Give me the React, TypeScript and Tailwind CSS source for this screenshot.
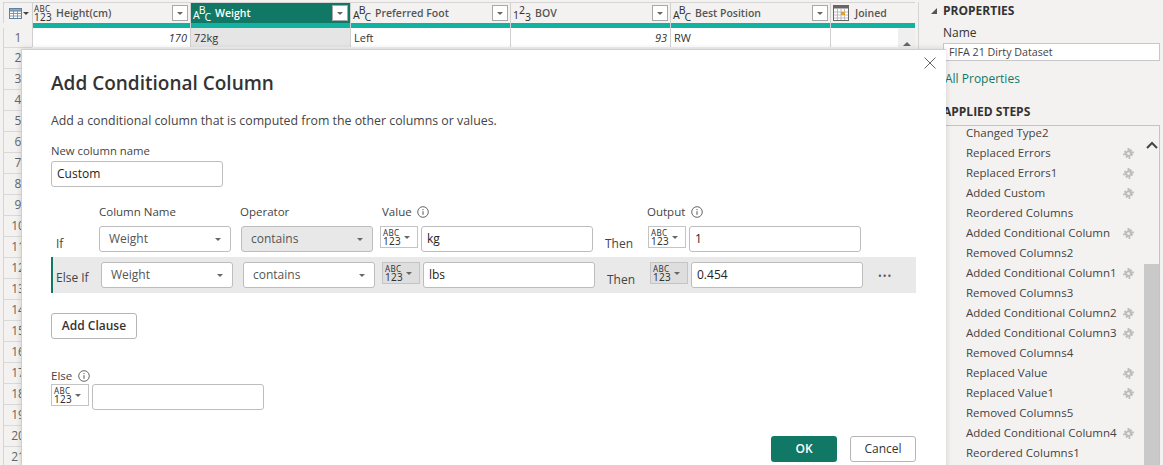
import React from "react";

const Caret = ({ c = "#666" }: { c?: string }) => (
  <svg width="6" height="3" viewBox="0 0 6 3" className="shrink-0"><path d="M0 0h6L3 3z" fill={c} /></svg>
);

const Abc123 = () => (
  <span className="block w-[18px] shrink-0 text-[10px] leading-[9px] tracking-[0.3px] text-[#333] font-['Noto_Sans'] first-line:text-[8px]">
    ABC 123
  </span>
);

const ABC = ({ white }: { white?: boolean }) => (
  <span className={`flex h-[20px] w-[20px] shrink-0 items-center pl-[1px] text-[10.5px] leading-none font-['Noto_Sans'] ${white ? "text-white" : "text-[#333]"}`}>
    <span className="mt-[4px]">A</span>
    <span className="-ml-[1px] mb-[6px]">B</span>
    <span className="-ml-[1px] mt-[8px]">C</span>
  </span>
);

const N123 = () => (
  <span className="flex h-[20px] w-[20px] shrink-0 items-center pl-[1px] text-[10.5px] leading-none font-['Noto_Sans'] text-[#333]">
    <span className="mt-[4px]">1</span>
    <span className="mb-[6px]">2</span>
    <span className="mt-[8px]">3</span>
  </span>
);

const TableIcon = () => (
  <svg width="13" height="11" viewBox="0 0 13 11" className="shrink-0">
    <rect x="0.5" y="0.5" width="12" height="10" fill="#fff" stroke="#5f7f9f" />
    <rect x="0.5" y="0.5" width="12" height="2.500" fill="#8faac4" stroke="#5f7f9f" />
    <path d="M4.500 3v7M8.500 3v7M1 5.500h11M1 8h11" stroke="#7d9ab8" strokeWidth="1" />
  </svg>
);

const CalIcon = () => (
  <svg width="16" height="16" viewBox="0 0 16 16" className="shrink-0">
    <rect x="0.5" y="0.5" width="15" height="15" fill="#fff" stroke="#666" />
    <rect x="0.5" y="0.5" width="15" height="3" fill="#666" />
    <path d="M4.500 4v11M8 4v11M11.500 4v11M1 7h14M1 10h14M1 13h14" stroke="#bbb" />
    <rect x="8" y="7" width="4" height="3" fill="#e0a030" />
  </svg>
);

const Gear = () => (
  <svg width="11" height="11" viewBox="0 0 12 12" className="shrink-0">
    <path d="M5 0h2v2l1.400-1L10 2.400 9 3.800h3v2H10l1 1.700L9.500 9 8 8v4H6V9.500L4 11 2.500 9.500 3.600 8H0V6h2.400L1 4.200 2.500 2.600 4.300 3.800 5 2z" fill="#bdbdbd" />
    <circle cx="6" cy="6" r="1.500" fill="#f3f2f1" />
  </svg>
);

const Info = () => (
  <svg width="12" height="12" viewBox="0 0 12 12" className="shrink-0">
    <circle cx="6" cy="6" r="5.300" fill="none" stroke="#555" strokeWidth="0.9" />
    <path d="M6 5.200v3.600M6 3v1.100" stroke="#555" strokeWidth="1" />
  </svg>
);

const columns = [
  { name: "Height(cm)", w: "w-[158px]", gap: "ml-[1px]", icon: <Abc123 />, val: "170", num: true },
  { name: "Weight", w: "w-[160px]", gap: "ml-[2px]", icon: <ABC white />, val: "72kg", sel: true },
  { name: "Preferred Foot", w: "w-[160px]", gap: "ml-[2px]", icon: <ABC />, val: "Left" },
  { name: "BOV", w: "w-[160px]", gap: "ml-[2px]", icon: <N123 />, val: "93", num: true },
  { name: "Best Position", w: "w-[160px]", gap: "ml-[2px]", icon: <ABC />, val: "RW" },
];

const steps: [string, boolean][] = [
  ["Changed Type2", false],
  ["Replaced Errors", true],
  ["Replaced Errors1", true],
  ["Added Custom", true],
  ["Reordered Columns", false],
  ["Added Conditional Column", true],
  ["Removed Columns2", false],
  ["Added Conditional Column1", true],
  ["Removed Columns3", false],
  ["Added Conditional Column2", true],
  ["Added Conditional Column3", true],
  ["Removed Columns4", false],
  ["Replaced Value", true],
  ["Replaced Value1", true],
  ["Removed Columns5", false],
  ["Added Conditional Column4", true],
  ["Reordered Columns1", false],
];

const Select = ({ value, disabled }: { value: string; disabled?: boolean }) => (
  <div className={`flex h-[26px] w-[132px] items-center justify-between rounded-[3px] border border-[#bdbdbd] pl-[9px] pr-[9px] text-[12px] text-[#555] ${disabled ? "bg-[#e8e8e8]" : "bg-white"}`}>
    <span>{value}</span>
    <Caret />
  </div>
);

const TypeBox = ({ shaded }: { shaded?: boolean }) => (
  <div className={`flex h-[22px] w-[38px] items-center gap-[3px] self-start border border-[#c4c4c4] pl-[2px] ${shaded ? "bg-[#dedede]" : "bg-white"}`}>
    <Abc123 />
    <Caret />
  </div>
);

const Text = ({ value, w = "w-[172px]" }: { value: string; w?: string }) => (
  <div className={`flex h-[26px] ${w} items-center rounded-[3px] border border-[#bdbdbd] bg-white px-[5px] text-[12px] text-[#252423]`}>
    {value}
  </div>
);

const Row = ({ label, shaded, v, o, disabled }: { label: string; shaded?: boolean; v: string; o: string; disabled?: boolean }) => (
  <div className={`flex items-center ${shaded ? "h-[36px] w-[865px] border-l-2 border-[#117865] bg-[#e9e9e9]" : "h-[26px] w-[865px]"}`}>
    <span className={`w-[48px] shrink-0 text-[12px] text-[#444] ${shaded ? "mt-[6px] pl-[3px]" : "mt-[9px] pl-[5px]"}`}>{label}</span>
    <div className="flex items-center gap-[10px]">
      <Select value="Weight" />
      <Select value="contains" disabled={disabled} />
    </div>
    <div className="ml-[7px] flex items-start gap-[3px]">
      <TypeBox shaded={shaded} />
      <Text value={v} />
    </div>
    <span className="ml-[12px] mt-[9px] w-[43px] text-[12px] text-[#444]">Then</span>
    <div className="flex items-start gap-[3px]">
      <TypeBox shaded={shaded} />
      <Text value={o} />
    </div>
    {shaded && <span className="ml-[15px] mt-[1px] text-[10px] leading-none tracking-[1px] text-[#555]">•••</span>}
  </div>
);

export default function App() {
  return (
    <div className="relative flex h-[465px] w-[1163px] overflow-hidden bg-[#f3f2f1] font-['Open_Sans','Noto_Sans',sans-serif] text-[12px] text-[#333]">
      {/* Data grid */}
      <div className="ml-[3px] mt-[2px] flex h-full w-[916px] shrink-0 flex-col border-r border-[#d5d5d5]">
        <div className="flex h-[26px] w-[912px] border-t border-[#d5d5d5]">
          <div className="flex h-[20px] w-[29px] shrink-0 items-center gap-[1px] border-l border-[#d5d5d5] pl-[5px]">
            <TableIcon />
            <Caret c="#444" />
          </div>
          {columns.map((c) => (
            <div key={c.name} className={`${c.w} shrink-0 border-l border-[#d0d0d0]`}>
              <div className={`flex h-[20px] items-center pl-[1px] pr-[2px] ${c.sel ? "bg-[#117865]" : ""}`}>
                <span className="flex w-[21px] shrink-0 items-center">{c.icon}</span>
                <span className={`${c.gap} mt-[1px] flex-1 text-[10.5px] font-semibold ${c.sel ? "text-white" : "text-[#555]"}`}>{c.name}</span>
                <span className="flex h-[16px] w-[16px] items-center justify-center border border-[#a8a8a8] bg-white"><Caret /></span>
              </div>
              <div className="h-[5px] bg-[#13b1a0]" />
            </div>
          ))}
          <div className="w-[85px] shrink-0 border-l border-[#d0d0d0]">
            <div className="flex h-[20px] items-center gap-[6px] pl-[2px]">
              <CalIcon />
              <span className="mt-[1px] text-[10.5px] font-semibold text-[#555]">Joined</span>
            </div>
            <div className="h-[5px] bg-[#13b1a0]" />
          </div>
        </div>
        <div className="flex h-[21px]">
          <div className="flex w-[29px] shrink-0 items-center justify-center border-l border-[#d5d5d5] pt-[1px] text-[#666]">1</div>
          {columns.map((c) => (
            <div key={c.name} className={`${c.w} flex shrink-0 items-center border-l border-[#d0d0d0] px-[3px] pt-[1px] text-[11px] ${c.sel ? "bg-[#e5e5e5]" : "bg-white"} ${c.num ? "justify-end italic" : ""}`}>{c.val}</div>
          ))}
          <div className="flex w-[85px] shrink-0 border-l border-[#d0d0d0] bg-white">
            <div className="ml-auto flex w-[17px] items-end justify-center bg-[#efefef] pb-[1px]">
              <svg width="8" height="4" viewBox="0 0 8 4"><path d="M4 0l4 4H0z" fill="#666" /></svg>
            </div>
          </div>
        </div>
        <div className="flex w-[29px] flex-col border-l border-[#d5d5d5] text-[#666]">
          {Array.from({ length: 20 }, (_, i) => (
            <div key={i} className="flex h-[21px] shrink-0 items-center justify-center border-t border-[#d9d9d9]">{i + 2}</div>
          ))}
        </div>
      </div>

      {/* Right panel */}
      <div className="flex min-w-0 flex-1 flex-col pl-[24px] pt-[3px]">
        <div className="relative flex h-[15px] items-center text-[12px] font-bold text-[#333]">
          <span className="absolute -left-[12px] top-[5px]">
            <svg width="6" height="6" viewBox="0 0 6 6"><path d="M6 0v6H0z" fill="#555" /></svg>
          </span>
          PROPERTIES
        </div>
        <div className="mt-[6px] h-[16px] text-[12px]">Name</div>
        <div className="mt-[3px] flex h-[22px] w-[217px] items-center border border-[#c8c8c8] bg-white pl-[5px] text-[10.7px] text-[#444]">FIFA 21 Dirty Dataset</div>
        <div className="mt-[9px] pl-[2px] text-[12px] text-[#117865]">All Properties</div>
        <div className="mt-[16px] h-[15px] text-[12px] font-bold leading-[15px]">APPLIED STEPS</div>
        <div className="mt-[6px] flex h-[400px] w-[217px] border border-[#c4c4c4] pl-[22px]">
          <div className="flex w-[173px] shrink-0 -translate-y-[3px] flex-col text-[11.5px] text-[#444]">
            {steps.map(([s, g]) => (
              <div key={s} className="flex h-[20px] shrink-0 items-center justify-between pr-[5px]">
                <span>{s}</span>
                {g && <Gear />}
              </div>
            ))}
          </div>
          <div className="ml-auto flex w-[15px] flex-col items-center">
            <svg width="12" height="8" viewBox="0 0 12 8" className="mt-[15px]"><path d="M1 7l5-5 5 5" fill="none" stroke="#444" strokeWidth="2" /></svg>
            <div className="mt-[115px] w-full flex-1 bg-[#c9c9c9]" />
          </div>
        </div>
      </div>

      {/* Dialog */}
      <div className="absolute left-[21px] top-[49px] flex h-[440px] w-[925px] flex-col border-l border-t border-[#cfcfcf] bg-white pl-[29px] pt-[20px] shadow-[0_0_6px_rgba(0,0,0,0.15)]">
        <button className="absolute right-[10px] top-[7px] text-[#555]">
          <svg width="12" height="12" viewBox="0 0 12 12"><path d="M.5.500l11 11M11.500.500l-11 11" stroke="#666" strokeWidth="1" /></svg>
        </button>
        <h1 className="h-[26px] text-[19px] font-semibold leading-[26px] text-[#333]">Add Conditional Column</h1>
        <p className="mt-[17px] text-[12.35px] leading-[16px] text-[#444]">Add a conditional column that is computed from the other columns or values.</p>
        <label className="mt-[14px] h-[16px] text-[11.3px] leading-[16px] text-[#444]">New column name</label>
        <div className="mt-[2px]"><Text value="Custom" w="w-[172px]" /></div>

        <div className="mt-[16px] flex h-[23px] items-start text-[11.5px] text-[#444]">
          <span className="ml-[48px] w-[141px]">Column Name</span>
          <span className="w-[141px]">Operator</span>
          <span className="flex w-[266px] items-center gap-[5px] pl-[1px]">Value <Info /></span>
          <span className="flex items-center gap-[6px]">Output <Info /></span>
        </div>
        <Row label="If" v="kg" o="1" disabled />
        <div className="mt-[5px]"><Row label="Else If" v="lbs" o="0.454" shaded /></div>

        <button className="mt-[20px] h-[26px] w-[86px] rounded-[3px] border border-[#b5b5b5] bg-white text-[12px] font-semibold text-[#333]">Add Clause</button>

        <div className="mt-[28px] flex h-[17px] items-center gap-[6px] text-[11.5px] text-[#444]">Else <Info /></div>
        <div className="flex items-start gap-[3px]">
          <TypeBox />
          <Text value="" />
        </div>

        <div className="mt-[26px] flex w-[865px] justify-end gap-[13px]">
          <button className="h-[26px] w-[66px] rounded-[3px] bg-[#117865] text-[12px] font-semibold text-white">OK</button>
          <button className="h-[26px] w-[66px] rounded-[3px] border border-[#b5b5b5] bg-white text-[12px] text-[#333]">Cancel</button>
        </div>
      </div>
    </div>
  );
}
